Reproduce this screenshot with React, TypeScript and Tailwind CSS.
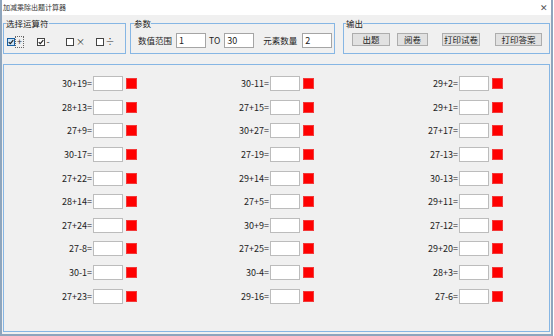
import React from 'react';

const rows: [string, string, string][] = [
  ['30+19=', '30-11=', '29+2='],
  ['28+13=', '27+15=', '29+1='],
  ['27+9=', '30+27=', '27+17='],
  ['30-17=', '27-19=', '27-13='],
  ['27+22=', '29+14=', '30-13='],
  ['28+14=', '27+5=', '29+11='],
  ['27+24=', '30+9=', '27-12='],
  ['27-8=', '27+25=', '29+20='],
  ['30-1=', '30-4=', '28+3='],
  ['27+23=', '29-16=', '27-6='],
];

const ops = [
  { label: '+', checked: true, focus: true },
  { label: '-', checked: true, focus: false },
  { label: '×', checked: false, focus: false },
  { label: '÷', checked: false, focus: false },
];

const CheckBox: React.FC<{ checked: boolean; focus: boolean }> = ({ checked, focus }) => (
  <span
    className={`shrink-0 w-[8px] h-[8px] border flex items-center justify-center ${
      focus ? 'bg-[#cce4f7] border-[#1a5fa0]' : 'bg-white border-[#444]'
    }`}
  >
    {checked && (
      <svg width="6" height="6" viewBox="0 0 6 6" fill="none">
        <path d="M0.7 3.1 L2.3 4.6 L5.3 1.2" stroke="#222" strokeWidth="1.2" />
      </svg>
    )}
  </span>
);

const Cell: React.FC<{ expr: string }> = ({ expr }) => (
  <div className="flex items-center">
    <span className="w-[60px] text-right text-[9px] leading-none text-[#222]">{expr}</span>
    <span className="ml-[1px] w-[30px] h-[15px] bg-white border border-[#bcbcbc]" />
    <span className="ml-[3px] w-[11px] h-[11px] bg-[#ff0000] border border-[#f23a3a]" />
  </div>
);

const inputBox = 'shrink-0 w-[30px] h-[15px] bg-white border border-[#a5a5a5] flex items-center pl-[2px] leading-none text-[9px]';
const btn = 'shrink-0 h-[13px] bg-[#e1e1e1] border border-[#adadad] flex items-center justify-center leading-none whitespace-nowrap';

export default function App() {
  return (
    <div className="w-[554px] h-[336px] bg-white">
      <div className="w-[553px] h-[336px] flex flex-col border-x-2 border-b-2 border-[#8ea5bd] font-['Noto_Sans_CJK_SC',sans-serif]">
        {/* title bar */}
        <div className="h-[15px] bg-white flex items-center justify-between pl-[1px] pr-[3px]">
          <span className="text-[7px] leading-none text-[#333]">加减乘除出题计算器</span>
          <span className="text-[9px] leading-none text-[#555]">✕</span>
        </div>

        <div className="flex-1 bg-[#f0f0f0] flex flex-col">
          {/* top groups */}
          <div className="flex mt-[3px] ml-[1px]">
            <fieldset className="w-[122px] h-[36px] border border-[#86b6e4]">
              <legend className="ml-[2px] text-[8.5px] leading-[10px] text-[#222]">选择运算符</legend>
              <div className="h-[25px] flex items-center pt-[3px] pl-[3px]">
                {ops.map((op) => (
                  <div key={op.label} className="w-[29.5px] flex items-center">
                    <CheckBox checked={op.checked} focus={op.focus} />
                    <span
                      className={`ml-[1px] px-[1px] text-[9px] leading-[10px] text-[#333] ${
                        op.focus ? 'outline outline-1 outline-dotted outline-[#666]' : ''
                      }`}
                    >
                      {op.label}
                    </span>
                  </div>
                ))}
              </div>
            </fieldset>

            <fieldset className="ml-[4px] w-[205px] h-[36px] border border-[#86b6e4]">
              <legend className="ml-[3px] text-[8.5px] leading-[10px] text-[#222]">参数</legend>
              <div className="h-[25px] flex items-center pl-[7px] text-[8.5px] text-[#222] whitespace-nowrap">
                <span>数值范围</span>
                <span className={`ml-[4px] ${inputBox}`}>1</span>
                <span className="ml-[3px]">TO</span>
                <span className={`ml-[4px] ${inputBox}`}>30</span>
                <span className="ml-[9px]">元素数量</span>
                <span className={`ml-[5px] ${inputBox}`}>2</span>
              </div>
            </fieldset>

            <fieldset className="ml-[8px] w-[207px] h-[36px] border border-[#86b6e4]">
              <legend className="ml-[2px] text-[8.5px] leading-[10px] text-[#222]">输出</legend>
              <div className="h-[25px] flex items-center pb-[3px] pl-[8px] text-[8.5px] text-[#222]">
                <button className={`w-[38px] ${btn}`}>出题</button>
                <button className={`ml-[7px] w-[31px] ${btn}`}>阅卷</button>
                <button className={`ml-[14px] w-[38px] ${btn}`}>打印试卷</button>
                <button className={`ml-[15px] w-[47px] ${btn}`}>打印答案</button>
              </div>
            </fieldset>
          </div>

          {/* question panel */}
          <div className="mt-[10px] ml-[1px] w-[547px] h-[268px] border border-[#86b6e4] pt-[7px] pl-[28px]">
            {rows.map((r, i) => (
              <div key={i} className="h-[23.6px] grid grid-cols-[177px_189px_105px] items-center">
                <Cell expr={r[0]} />
                <Cell expr={r[1]} />
                <Cell expr={r[2]} />
              </div>
            ))}
          </div>
        </div>
      </div>
    </div>
  );
}
